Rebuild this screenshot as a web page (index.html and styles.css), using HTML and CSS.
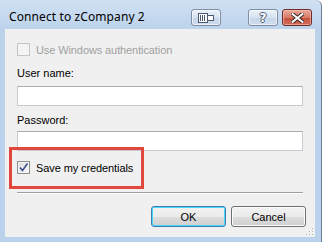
FILE: index.html
```html
<!DOCTYPE html>
<html lang="en">
<head>
  <meta charset="UTF-8" />
  <title>Connect to zCompany 2</title>
  <link rel="stylesheet" href="styles.css">
</head>
<body>
  <div class="window">
    <div class="titlebar">
      <span class="title">Connect to zCompany 2</span>
      <div class="caption-buttons">
        <button class="cap-btn extra">
          <svg width="16" height="10" viewBox="0 0 16 10">
            <rect x="0.5" y="0.5" width="9" height="9" fill="#fff" stroke="#4b5a70"/>
            <rect x="2" y="2" width="1" height="6" fill="#4b5a70"/>
            <rect x="4" y="2" width="1" height="6" fill="#4b5a70"/>
            <rect x="6" y="2" width="1" height="6" fill="#4b5a70"/>
            <rect x="9.5" y="2.5" width="6" height="5" fill="#fff" stroke="#4b5a70"/>
          </svg>
        </button>
        <button class="cap-btn help">?</button>
        <button class="cap-btn close">
          <svg width="13" height="10" viewBox="0 0 13 10">
            <path d="M1.5 1 L11.5 9 M11.5 1 L1.5 9" stroke="#3c2220" stroke-width="4" stroke-linecap="square"/>
            <path d="M1.5 1 L11.5 9 M11.5 1 L1.5 9" stroke="#fff" stroke-width="2" stroke-linecap="square"/>
          </svg>
        </button>
      </div>
    </div>

    <div class="client">
      <label class="check disabled">
        <span class="box"></span>
        <span>Use Windows authentication</span>
      </label>

      <div class="field user">
        <label>User name:</label>
        <input type="text">
      </div>

      <div class="field pass">
        <label>Password:</label>
        <input type="password">
      </div>

      <label class="check highlight">
        <span class="box">
          <svg width="11" height="11" viewBox="0 0 11 11">
            <path d="M2 5.5 L4.5 8.5 L9.5 1.5" fill="none" stroke="#3b4f8f" stroke-width="1.6"/>
          </svg>
        </span>
        <span>Save my credentials</span>
      </label>

      <div class="separator"></div>

      <div class="footer">
        <button class="btn default">OK</button>
        <button class="btn">Cancel</button>
      </div>

      <svg class="grip" width="9" height="9" viewBox="0 0 9 9">
        <rect x="7" y="1" width="1" height="1" fill="#b5b5b5"/>
        <rect x="4" y="4" width="1" height="1" fill="#b5b5b5"/>
        <rect x="7" y="4" width="1" height="1" fill="#b5b5b5"/>
        <rect x="1" y="7" width="1" height="1" fill="#b5b5b5"/>
        <rect x="4" y="7" width="1" height="1" fill="#b5b5b5"/>
        <rect x="7" y="7" width="1" height="1" fill="#b5b5b5"/>
      </svg>
    </div>
  </div>
</body>
</html>
```

FILE: styles.css
```css
body {
  margin: 0;
  padding: 0;
  background: #fff;
  font-family: 'Liberation Sans', Arial, sans-serif;
  font-size: 11px;
}

.window {
  width: 321px;
  height: 242px;
  display: flex;
  flex-direction: column;
  background: linear-gradient(#d0e0f2, #bcd3ec 30px, #bad2eb);
  border-right: 1px solid #6f7f93;
  border-top-right-radius: 6px;
}

.titlebar {
  height: 29px;
  display: flex;
  justify-content: space-between;
  align-items: flex-start;
  padding-left: 9px;
  flex-shrink: 0;
}

.title {
  font-family: 'Noto Sans', sans-serif;
  font-size: 12px;
  color: #000;
  margin-top: 8px;
  letter-spacing: 0.1px;
}

.caption-buttons {
  display: flex;
  margin-top: 9px;
  margin-right: 9px;
}

.cap-btn {
  width: 30px;
  height: 17px;
  padding: 0;
  border: 1px solid #7e8da3;
  border-radius: 3px;
  background: linear-gradient(#eaf1f9, #d6e2f0 50%, #c5d6ea 51%, #cfdcec);
  display: flex;
  align-items: center;
  justify-content: center;
  box-shadow: inset 0 0 0 1px rgba(255, 255, 255, 0.6);
}

.cap-btn.extra {
  margin-right: 27px;
}

.cap-btn.help {
  margin-right: 4px;
  font-family: 'DejaVu Sans', sans-serif;
  font-weight: bold;
  font-size: 12px;
  color: #fff;
  text-shadow: -1px 0 #4b5a70, 1px 0 #4b5a70, 0 -1px #4b5a70, 0 1px #4b5a70;
}

.cap-btn.close {
  border-color: #6e2b28;
  background: linear-gradient(#e9a99c, #d77a68 50%, #c5503c 51%, #cf6d58);
  box-shadow: inset 0 0 0 1px rgba(255, 210, 200, 0.5);
}

.client {
  flex: 1;
  position: relative;
  margin: 0 6px 5px 5px;
  background: #f0f0f0;
  padding: 14px 12px 0;
  display: flex;
  flex-direction: column;
  color: #000;
}

.check {
  display: flex;
  align-items: center;
  gap: 6px;
  height: 13px;
  letter-spacing: -0.1px;
}

.check .box {
  width: 11px;
  height: 11px;
  border: 1px solid #8e8f8f;
  background: linear-gradient(135deg, #dcdcdc, #fbfbfb);
  box-shadow: inset 0 0 0 1px #f4f4f4;
  display: flex;
  align-items: center;
  justify-content: center;
}

.check.disabled {
  color: #a0a0a0;
}

.check.disabled .box {
  border-color: #c5c5c5;
  background: #f4f4f4;
  box-shadow: none;
}

.field {
  display: flex;
  flex-direction: column;
}

.field label {
  line-height: 13px;
}

.field input {
  height: 20px;
  box-sizing: border-box;
  border: 1px solid #c5c9d0;
  border-top-color: #abadb3;
  background: #fff;
  margin: 0;
  padding: 0 3px;
}

.field.user {
  margin-top: 11px;
}

.field.user label {
  margin-bottom: 6px;
}

.field.pass {
  margin-top: 8px;
}

.field.pass label {
  margin-bottom: 4px;
}

.highlight {
  position: relative;
  margin-top: 10px;
}

.highlight::after {
  content: "";
  position: absolute;
  left: -8px;
  top: -14px;
  width: 129px;
  height: 36px;
  border: 3px solid #e2473e;
}

.separator {
  margin-top: 18px;
  height: 1px;
  border-top: 1px solid #a0a0a0;
  background: #fff;
}

.footer {
  display: flex;
  justify-content: flex-end;
  gap: 5px;
  margin-top: 12px;
  margin-right: -3px;
}

.btn {
  width: 75px;
  height: 21px;
  border: 1px solid #707070;
  border-radius: 3px;
  background: linear-gradient(#f2f2f2, #ebebeb 50%, #dddddd 51%, #cfcfcf);
  box-shadow: inset 0 0 0 1px #fcfcfc;
  font-family: 'Liberation Sans', Arial, sans-serif;
  font-size: 11px;
  color: #000;
  padding: 0;
}

.btn.default {
  border-color: #3c7fb1;
  box-shadow: inset 0 0 0 1px #48d8fb;
}

.grip {
  position: absolute;
  right: 1px;
  bottom: 1px;
}
```
